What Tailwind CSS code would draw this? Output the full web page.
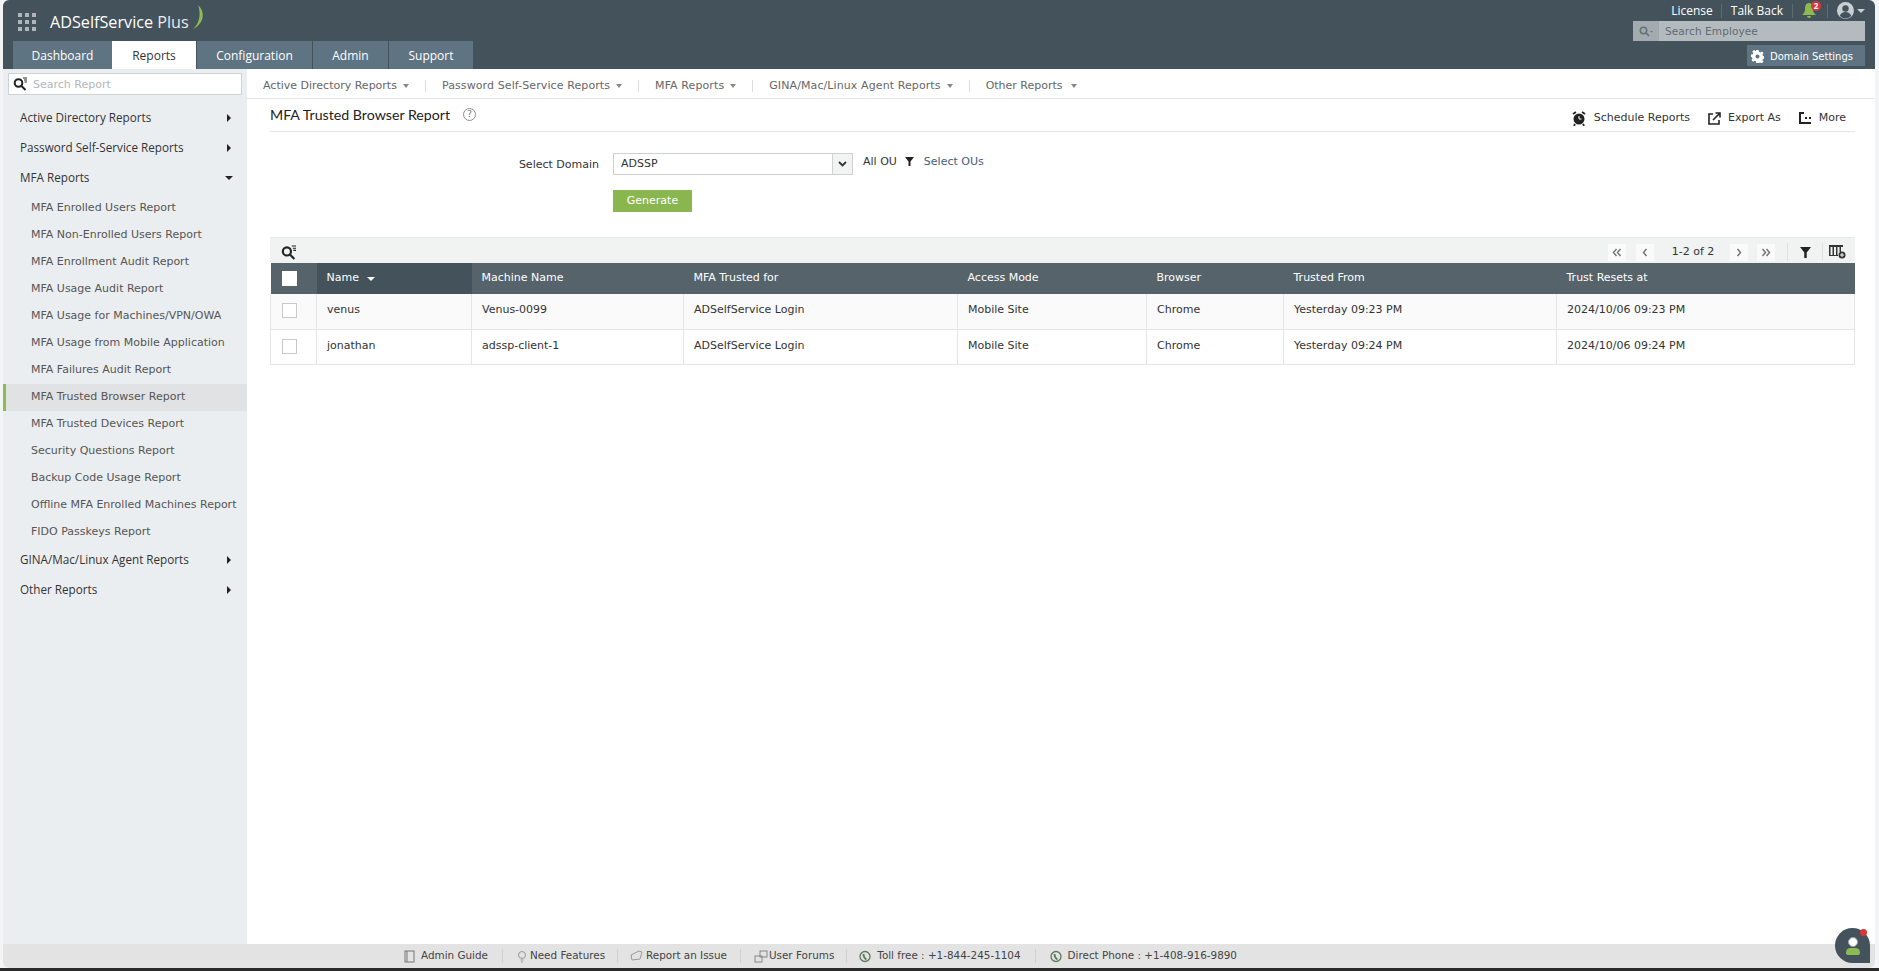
<!DOCTYPE html>
<html lang="en">

<head>
  <meta charset="UTF-8">
  <meta name="viewport" content="width=device-width, initial-scale=1.0">
  <title>ADSelfService Plus - MFA Trusted Browser Report</title>
  <script src="https://cdn.jsdelivr.net/npm/@tailwindcss/browser@4"></script>
</head>

<body>
  <div class="relative w-[1879px] h-[971px] overflow-hidden bg-[#f3f4f5] font-['DejaVu_Sans',sans-serif] text-[11px] text-[#333]">
    <div class="flex flex-col h-[968px] ml-[3px] mr-[4px] rounded-[6px] overflow-hidden bg-white">

      <!-- header -->
      <div class="relative h-[69px] shrink-0 bg-[#44525c] flex justify-between">
        <div class="flex flex-col pl-[10px]">
          <div class="h-[41px] flex items-center pl-[5px] pt-[2px]">
            <div class="grid grid-cols-3 gap-[3px] w-[18px]">
              <span class="w-[4px] h-[4px] bg-[#aeb6bb]"></span><span class="w-[4px] h-[4px] bg-[#aeb6bb]"></span><span class="w-[4px] h-[4px] bg-[#aeb6bb]"></span>
              <span class="w-[4px] h-[4px] bg-[#aeb6bb]"></span><span class="w-[4px] h-[4px] bg-[#aeb6bb]"></span><span class="w-[4px] h-[4px] bg-[#aeb6bb]"></span>
              <span class="w-[4px] h-[4px] bg-[#aeb6bb]"></span><span class="w-[4px] h-[4px] bg-[#aeb6bb]"></span><span class="w-[4px] h-[4px] bg-[#aeb6bb]"></span>
            </div>
            <div class="ml-[14px] mt-[1px] font-['Open_Sans',sans-serif] text-[16.200px] font-medium text-white whitespace-nowrap">ADSelfService <span class="font-normal text-[#e8ebed]">Plus</span></div>
            <svg class="ml-[3px] -mt-[7px]" width="12" height="26" viewBox="0 0 12 26"><path d="M6 0 C13 6 13 18 1 24 C8 18 9 8 6 0Z" fill="#8dbb4f"/></svg>
          </div>
          <div class="flex h-[28px] font-['Open_Sans',sans-serif] text-[12px] text-white">
            <div class="w-[99px] pt-[2px] bg-[#5f7483] flex items-center justify-center">Dashboard</div>
            <div class="w-[84px] pt-[2px] bg-white text-[#333] flex items-center justify-center">Reports</div>
            <div class="w-[115px] pt-[2px] ml-px bg-[#5f7483] flex items-center justify-center">Configuration</div>
            <div class="w-[75px] pt-[2px] ml-px bg-[#5f7483] flex items-center justify-center">Admin</div>
            <div class="w-[84px] pt-[2px] ml-px bg-[#5f7483] flex items-center justify-center">Support</div>
          </div>
        </div>
        <div class="flex flex-col items-end pr-[9px]">
          <div class="h-[21px] flex items-center font-['Open_Sans',sans-serif] text-[12px] text-white">
            <span>License</span>
            <span class="w-px h-[14px] bg-[#5d6b75] ml-[8px] mr-[9px]"></span>
            <span>Talk Back</span>
            <span class="w-px h-[14px] bg-[#5d6b75] ml-[9px] mr-[9px]"></span>
            <span class="relative w-[16px] h-[16px]">
              <svg width="14" height="15" viewBox="0 0 14 15" fill="#8dbb4f"><path d="M7 0C4 0 3 3 3 6c0 3-1 4-3 6h14c-2-2-3-3-3-6 0-3-1-6-4-6zM5 13a2 2 0 0 0 4 0z"/></svg>
              <span class="absolute -top-[2px] left-[9px] w-[10px] h-[10px] rounded-full bg-[#d9363a] text-white text-[8px] font-bold leading-[10px] text-center">2</span>
            </span>
            <span class="w-px h-[14px] bg-[#5d6b75] ml-[9px] mr-[9px]"></span>
            <svg width="17" height="17" viewBox="0 0 17 17"><circle cx="8.500" cy="8.500" r="8.500" fill="#c9ced1"/><circle cx="8.500" cy="6.500" r="3.200" fill="#44525c"/><path d="M2.800 14c1-3 3-4 5.700-4s4.700 1 5.700 4a8 8 0 0 1-11.400 0z" fill="#44525c"/></svg>
            <span class="ml-[3px] w-0 h-0 border-x-[4px] border-x-transparent border-t-[4px] border-t-[#c9ced1]"></span>
            <span class="w-[1px]"></span>
          </div>
          <div class="flex h-[20px] w-[232px] mr-[1px] bg-[#b4bbbf] items-center">
            <div class="w-[26px] h-full bg-[#a3abb0] flex items-center justify-center">
              <svg width="14" height="11" viewBox="0 0 14 11" fill="none" stroke="#66727a" stroke-width="1.600"><circle cx="4.500" cy="4.500" r="3.200"/><path d="M7 7l3 3"/><path d="M11 5h3l-1.500 1.500z" fill="#66727a" stroke="none"/></svg>
            </div>
            <span class="ml-[6px] pt-[1px] text-[#5f6b72] text-[10.500px] tracking-[0.1px]">Search Employee</span>
          </div>
          <div class="flex h-[21px] w-[118px] mt-[4px] mr-[1px] pl-[4px] pt-[1px] bg-[#5f7483] items-center gap-[6px] text-white text-[10px]">
            <svg width="13" height="13" viewBox="0 0 13 13" fill="#fff"><path d="M5.300 0h2.400l.3 1.800 1.300.6 1.500-1 1.700 1.700-1 1.500.5 1.300 1.800.3v2.400l-1.800.3-.6 1.300 1 1.500-1.700 1.700-1.500-1-1.300.5-.3 1.800H5.300L5 11.200l-1.300-.5-1.500 1L.5 10l1-1.500L1 7.200-.1 6.900V4.500L1.700 4.200l.6-1.300-1-1.500L3 .1l1.500 1L5 .7z"/><circle cx="6.500" cy="6.500" r="2" fill="#5f7483"/></svg>
            <span>Domain Settings</span>
          </div>
        </div>
      </div>

      <div class="flex flex-1 min-h-0">
        <!-- sidebar -->
        <div class="w-[244px] shrink-0 bg-[#ebeef0] pt-[4px] flex flex-col">
          <div class="mx-[5px] h-[22px] bg-white border border-[#d0d3d5] flex items-center pl-[4px] gap-[6px]">
            <svg width="14" height="14" viewBox="0 0 14 14" fill="none" stroke="#222" stroke-width="2"><circle cx="5.500" cy="6" r="3.800"/><path d="M8.500 9l4 4"/><path d="M10 1h4M11 3h3M11.500 5h2.500" stroke-width="1"/></svg>
            <span class="pt-[3px] text-[#b3b7ba]">Search Report</span>
          </div>
          <div class="mt-[8px] font-['Open_Sans',sans-serif] text-[11.700px] text-[#333]">
            <div class="h-[30px] flex items-center justify-between pl-[17px] pr-[16px]"><span>Active Directory Reports</span><span class="w-0 h-0 border-y-[4px] border-y-transparent border-l-[4px] border-l-[#222]"></span></div>
            <div class="h-[30px] flex items-center justify-between pl-[17px] pr-[16px]"><span>Password Self-Service Reports</span><span class="w-0 h-0 border-y-[4px] border-y-transparent border-l-[4px] border-l-[#222]"></span></div>
            <div class="h-[30px] flex items-center justify-between pl-[17px] pr-[14px]"><span>MFA Reports</span><span class="w-0 h-0 border-x-[4px] border-x-transparent border-t-[4px] border-t-[#222]"></span></div>
          </div>
          <div class="mt-[2px] text-[#555]">
            <div class="h-[27px] flex items-center pl-[28px]">MFA Enrolled Users Report</div>
            <div class="h-[27px] flex items-center pl-[28px]">MFA Non-Enrolled Users Report</div>
            <div class="h-[27px] flex items-center pl-[28px]">MFA Enrollment Audit Report</div>
            <div class="h-[27px] flex items-center pl-[28px]">MFA Usage Audit Report</div>
            <div class="h-[27px] flex items-center pl-[28px]">MFA Usage for Machines/VPN/OWA</div>
            <div class="h-[27px] flex items-center pl-[28px]">MFA Usage from Mobile Application</div>
            <div class="h-[27px] flex items-center pl-[28px]">MFA Failures Audit Report</div>
            <div class="h-[27px] flex items-center pl-[25px] bg-[#e1e2e3] border-l-[3px] border-l-[#8dbb4f]">MFA Trusted Browser Report</div>
            <div class="h-[27px] flex items-center pl-[28px]">MFA Trusted Devices Report</div>
            <div class="h-[27px] flex items-center pl-[28px]">Security Questions Report</div>
            <div class="h-[27px] flex items-center pl-[28px]">Backup Code Usage Report</div>
            <div class="h-[27px] flex items-center pl-[28px] whitespace-nowrap">Offline MFA Enrolled Machines Report</div>
            <div class="h-[27px] flex items-center pl-[28px]">FIDO Passkeys Report</div>
          </div>
          <div class="-mt-[1px] font-['Open_Sans',sans-serif] text-[11.700px] text-[#333]">
            <div class="h-[30px] flex items-center justify-between pl-[17px] pr-[16px]"><span>GINA/Mac/Linux Agent Reports</span><span class="w-0 h-0 border-y-[4px] border-y-transparent border-l-[4px] border-l-[#222]"></span></div>
            <div class="h-[30px] flex items-center justify-between pl-[17px] pr-[16px]"><span>Other Reports</span><span class="w-0 h-0 border-y-[4px] border-y-transparent border-l-[4px] border-l-[#222]"></span></div>
          </div>
        </div>

        <!-- main -->
        <div class="flex-1 min-w-0 flex flex-col">
          <div class="h-[30px] shrink-0 pt-[5px] border-b border-[#e4e6e7] flex items-center pl-[16px] text-[#666]">
            <span>Active Directory Reports</span><span class="ml-[6px] w-0 h-0 border-x-[3.500px] border-x-transparent border-t-[4px] border-t-[#888]"></span>
            <span class="w-px h-[12px] bg-[#ddd] mx-[16px]"></span>
            <span class="tracking-[0.1px]">Password Self-Service Reports</span><span class="ml-[6px] w-0 h-0 border-x-[3.500px] border-x-transparent border-t-[4px] border-t-[#888]"></span>
            <span class="w-px h-[12px] bg-[#ddd] mx-[16px]"></span>
            <span class="tracking-[0.1px]">MFA Reports</span><span class="ml-[6px] w-0 h-0 border-x-[3.500px] border-x-transparent border-t-[4px] border-t-[#888]"></span>
            <span class="w-px h-[12px] bg-[#ddd] mx-[16px]"></span>
            <span class="tracking-[0.1px]">GINA/Mac/Linux Agent Reports</span><span class="ml-[6px] w-0 h-0 border-x-[3.500px] border-x-transparent border-t-[4px] border-t-[#888]"></span>
            <span class="w-px h-[12px] bg-[#ddd] mx-[16px]"></span>
            <span>Other Reports</span><span class="ml-[8px] w-0 h-0 border-x-[3.500px] border-x-transparent border-t-[4px] border-t-[#888]"></span>
          </div>

          <div class="flex-1 min-h-0 pl-[23px] pr-[20px]">
            <div class="h-[33px] border-b border-[#e4e6e7] flex items-center justify-between">
              <div class="flex items-center">
                <span class="font-['Lato',sans-serif] text-[14.200px] text-[#222]">MFA Trusted Browser Report</span>
                <span class="ml-[13px] w-[13px] h-[13px] rounded-full border border-[#8a8f92] text-[9px] leading-[11px] text-center text-[#777]">?</span>
              </div>
              <div class="flex items-center pr-[9px] mt-[6px] text-[#333]">
                <svg width="14" height="15" viewBox="0 0 14 15"><circle cx="7" cy="8" r="5.500" fill="#222"/><path d="M1 3l3-2M13 3l-3-2M3 13l-1 2M11 13l1 2" stroke="#222" stroke-width="1.800"/><path d="M7 5v3h2.500" stroke="#fff" fill="none"/></svg>
                <span class="ml-[8px]">Schedule Reports</span>
                <svg class="ml-[18px]" width="13" height="13" viewBox="0 0 13 13" fill="none" stroke="#222" stroke-width="1.600"><path d="M5 2H1v10h10V8"/><path d="M5 8l6-6M7.500 1H12v4.500"/></svg>
                <span class="ml-[7px]">Export As</span>
                <svg class="ml-[18px]" width="12" height="12" viewBox="0 0 12 12" fill="#222"><path d="M0 0h5v2H2v8h10v2H0zM6 5h2v2H6zM10 5h2v2h-2z"/></svg>
                <span class="ml-[8px]">More</span>
              </div>
            </div>

            <div class="mt-[21px] flex items-start">
              <span class="w-[343px] pr-[14px] text-right pt-[4px] text-[#333]">Select Domain</span>
              <div class="w-[240px] h-[22px] border border-[#cfd1d2] flex items-center justify-between">
                <span class="pl-[7px]">ADSSP</span>
                <span class="w-[20px] h-full border-l border-[#cfd1d2] bg-[#f2f3f3] flex items-center justify-center">
                  <svg width="9" height="6" viewBox="0 0 9 6" fill="none" stroke="#333" stroke-width="1.800"><path d="M1 1l3.500 3.500L8 1"/></svg>
                </span>
              </div>
              <span class="ml-[10px] mt-[1px]">All OU</span>
              <svg class="ml-[8px] mt-[4px]" width="9" height="9" viewBox="0 0 9 9" fill="#222"><path d="M0 0h9L5.500 4.500V9h-2V4.500z"/></svg>
              <span class="ml-[10px] mt-[1px] text-[#3f6078]">Select OUs</span>
            </div>
            <div class="mt-[15px] ml-[343px] w-[79px] h-[22px] bg-[#8ab650] text-white flex items-center justify-center">Generate</div>

            <!-- report table -->
            <div class="mt-[25px] w-[1585px]">
              <div class="h-[26px] pt-[3px] bg-[#f1f2f2] border-t border-[#e8e9ea] flex items-center justify-between pl-[11px] pr-[9px] relative">
                <svg width="15" height="15" viewBox="0 0 14 14" fill="none" stroke="#222" stroke-width="2"><circle cx="5.500" cy="6" r="3.800"/><path d="M8.500 9l4 4"/><path d="M10 1h4M11 3h3M11.500 5h2.500" stroke-width="1"/></svg>
                <div class="flex items-center text-[#333]">
                  <span class="w-[18px] h-[17px] bg-[#fafafa] flex items-center justify-center">
                    <svg width="10" height="9" viewBox="0 0 10 9" fill="none" stroke="#777" stroke-width="1.500"><path d="M4.500 1L1.500 4.500L4.500 8M8.500 1L5.500 4.500L8.500 8"/></svg>
                  </span>
                  <span class="ml-[10px] w-[18px] h-[17px] bg-[#fafafa] flex items-center justify-center">
                    <svg width="6" height="9" viewBox="0 0 6 9" fill="none" stroke="#777" stroke-width="1.500"><path d="M4.500 1L1.500 4.500L4.500 8"/></svg>
                  </span>
                  <span class="ml-[15px] w-[48px] text-center whitespace-nowrap">1-2 of 2</span>
                  <span class="ml-[13px] w-[18px] h-[17px] bg-[#fafafa] flex items-center justify-center">
                    <svg width="6" height="9" viewBox="0 0 6 9" fill="none" stroke="#777" stroke-width="1.500"><path d="M1.500 1L4.500 4.500L1.500 8"/></svg>
                  </span>
                  <span class="ml-[9px] w-[18px] h-[17px] bg-[#fafafa] flex items-center justify-center">
                    <svg width="10" height="9" viewBox="0 0 10 9" fill="none" stroke="#777" stroke-width="1.500"><path d="M1.500 1L4.500 4.500L1.500 8M5.500 1L8.500 4.500L5.500 8"/></svg>
                  </span>
                  <span class="w-px h-[18px] bg-[#e0e1e2] ml-[12px] mr-[12px]"></span>
                  <svg width="11" height="11" viewBox="0 0 9 9" fill="#222"><path d="M0 0h9L5.500 4.500V9h-2V4.500z"/></svg>
                  <span class="w-px h-[18px] bg-[#e0e1e2] ml-[11px] mr-[6px]"></span>
                  <svg width="17" height="14" viewBox="0 0 17 14"><path d="M0 0h14v2H0zM0 2h1.500v9H0zM3.500 2h1.500v9H3.500zM7 2h1.500v9H7zM10.500 2h1.500v5h-1.500zM0 10h9v1H0z" fill="#333"/><circle cx="13" cy="10" r="3.500" fill="#333"/><path d="M11 10h4M13 8v4" stroke="#fff"/></svg>
                </div>
              </div>
              <table class="w-full table-fixed border-collapse text-[#333]">
                <colgroup>
                  <col class="w-[46px]"><col class="w-[155px]"><col class="w-[212px]"><col class="w-[274px]"><col class="w-[189px]"><col class="w-[137px]"><col class="w-[273px]"><col>
                </colgroup>
                <thead>
                  <tr class="h-[31px] bg-[#56636b] text-white text-left font-normal">
                    <th class="pl-[11px] font-normal"><span class="block w-[15px] h-[15px] bg-white"></span></th>
                    <th class="pl-[10px] font-normal bg-[#44525c]"><span class="flex items-center gap-[8px]">Name<span class="w-0 h-0 border-x-[4px] border-x-transparent border-t-[4px] border-t-white"></span></span></th>
                    <th class="pl-[10px] font-normal">Machine Name</th>
                    <th class="pl-[10px] font-normal">MFA Trusted for</th>
                    <th class="pl-[10px] font-normal">Access Mode</th>
                    <th class="pl-[10px] font-normal">Browser</th>
                    <th class="pl-[10px] font-normal">Trusted From</th>
                    <th class="pl-[10px] font-normal">Trust Resets at</th>
                  </tr>
                </thead>
                <tbody>
                  <tr class="h-[35px] bg-[#fafafa] border-b border-[#e4e5e6] [&>td]:pb-[2px]">
                    <td class="pl-[11px] border-l border-[#e4e5e6]"><span class="block w-[15px] h-[15px] bg-white border border-[#c8c9ca]"></span></td>
                    <td class="pl-[10px] border-l border-[#e4e5e6]">venus</td>
                    <td class="pl-[10px] border-l border-[#e4e5e6]">Venus-0099</td>
                    <td class="pl-[10px] border-l border-[#e4e5e6]">ADSelfService Login</td>
                    <td class="pl-[10px] border-l border-[#e4e5e6]">Mobile Site</td>
                    <td class="pl-[10px] border-l border-[#e4e5e6]">Chrome</td>
                    <td class="pl-[10px] border-l border-[#e4e5e6]">Yesterday 09:23 PM</td>
                    <td class="pl-[10px] border-x border-[#e4e5e6]">2024/10/06 09:23 PM</td>
                  </tr>
                  <tr class="h-[35px] bg-white border-b border-[#e4e5e6]">
                    <td class="pl-[11px] border-l border-[#e4e5e6]"><span class="block w-[15px] h-[15px] bg-white border border-[#c8c9ca]"></span></td>
                    <td class="pl-[10px] border-l border-[#e4e5e6]">jonathan</td>
                    <td class="pl-[10px] border-l border-[#e4e5e6]">adssp-client-1</td>
                    <td class="pl-[10px] border-l border-[#e4e5e6]">ADSelfService Login</td>
                    <td class="pl-[10px] border-l border-[#e4e5e6]">Mobile Site</td>
                    <td class="pl-[10px] border-l border-[#e4e5e6]">Chrome</td>
                    <td class="pl-[10px] border-l border-[#e4e5e6]">Yesterday 09:24 PM</td>
                    <td class="pl-[10px] border-x border-[#e4e5e6]">2024/10/06 09:24 PM</td>
                  </tr>
                </tbody>
              </table>
            </div>
          </div>
        </div>
      </div>

      <!-- footer -->
      <div class="h-[24px] shrink-0 bg-[#e3e3e3] flex items-center pl-[401px] text-[10.400px] text-[#444]">
        <svg width="11" height="13" viewBox="0 0 11 13" fill="none" stroke="#777"><rect x="1" y="1" width="9" height="11"/><path d="M3 1v11"/></svg>
        <span class="ml-[6px]">Admin Guide</span>
        <span class="w-px h-[14px] bg-[#d2d2d2] mx-[14px]"></span>
        <svg width="10" height="13" viewBox="0 0 10 13" fill="none" stroke="#999"><circle cx="5" cy="5" r="3.500"/><path d="M3.500 10h3M4 12h2"/></svg>
        <span class="ml-[3px]">Need Features</span>
        <span class="w-px h-[14px] bg-[#d2d2d2] mx-[12px]"></span>
        <svg width="13" height="12" viewBox="0 0 13 12" fill="none" stroke="#999"><path d="M1 5l8-4 3 1-2 7-8 1z"/></svg>
        <span class="ml-[3px]">Report an Issue</span>
        <span class="w-px h-[14px] bg-[#d2d2d2] mx-[13px]"></span>
        <svg width="14" height="13" viewBox="0 0 14 13" fill="none" stroke="#888"><rect x="6" y="1" width="7" height="6"/><rect x="1" y="6" width="7" height="6"/></svg>
        <span class="ml-[1px]">User Forums</span>
        <span class="w-px h-[14px] bg-[#d2d2d2] mx-[12px]"></span>
        <svg width="12" height="13" viewBox="0 0 12 13" fill="none" stroke="#5c7a5c" stroke-width="1.300"><circle cx="6" cy="6.500" r="5"/><path d="M4.500 4c0 3 1 4.500 3 5.500" stroke-width="1.800"/></svg>
        <span class="ml-[6px]">Toll free : +1-844-245-1104</span>
        <span class="w-px h-[14px] bg-[#d2d2d2] mx-[14px]"></span>
        <svg width="12" height="13" viewBox="0 0 12 13" fill="none" stroke="#5c7a5c" stroke-width="1.300"><circle cx="6" cy="6.500" r="5"/><path d="M4.500 4c0 3 1 4.500 3 5.500" stroke-width="1.800"/></svg>
        <span class="ml-[6px]">Direct Phone : +1-408-916-9890</span>
      </div>
    </div>

    <!-- window edge at the bottom -->
    <div class="h-[3px] bg-[#2a2a2a]"></div>

    <!-- chat bubble -->
    <div class="absolute left-[1835px] top-[928px] w-[35px] h-[35px] rounded-full rounded-br-[8px] bg-[#44525c] flex flex-col items-center justify-center">
      <span class="w-[10px] h-[10px] rounded-full bg-white border border-[#9aa4aa]"></span>
      <span class="mt-[1px] w-[14px] h-[7px] rounded-t-[5px] rounded-b-[3px] bg-[#8dbb4f]"></span>
      <span class="absolute top-[1px] right-[3px] w-[7px] h-[7px] rounded-full bg-[#d9363a]"></span>
    </div>
  </div>
</body>

</html>
